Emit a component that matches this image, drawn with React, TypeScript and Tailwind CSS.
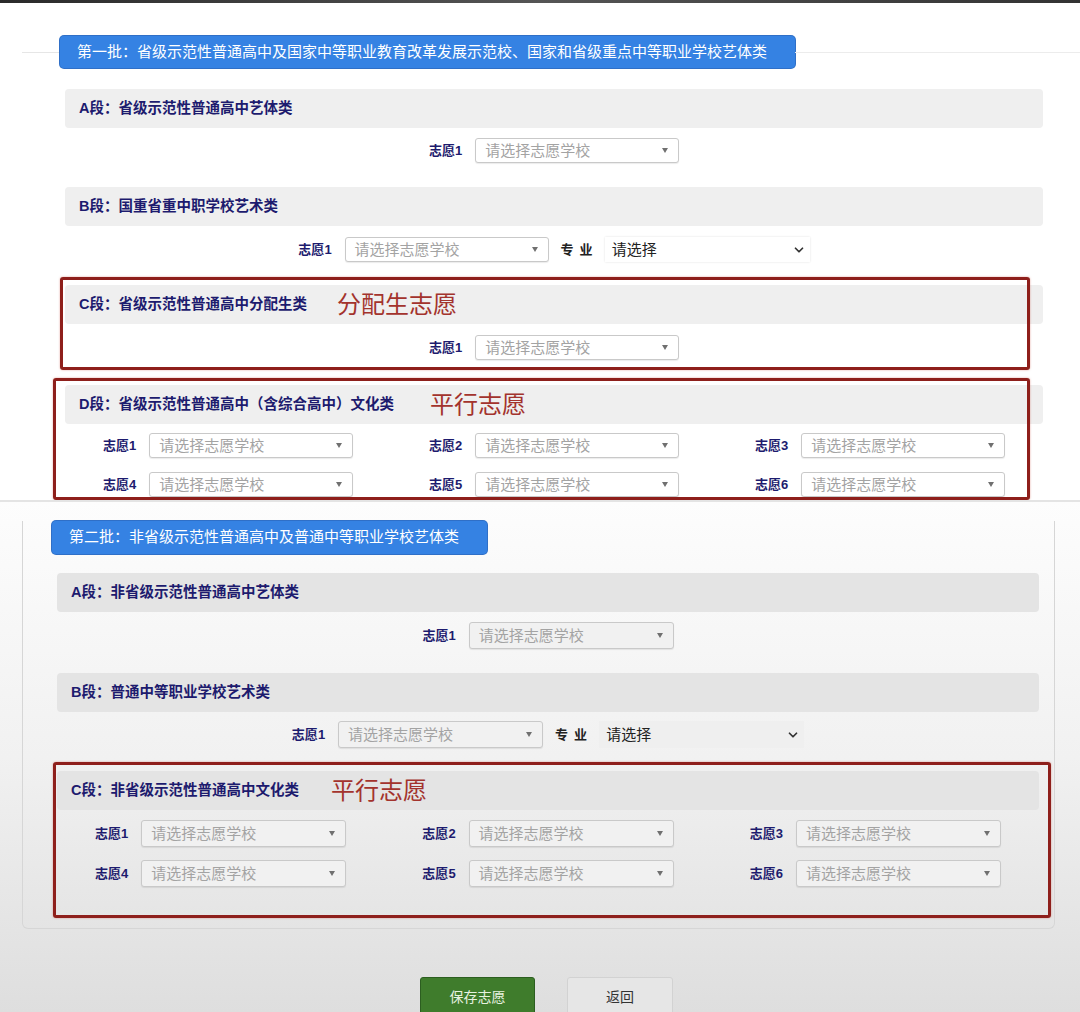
import { ChevronDown } from "lucide-react"

const navy = "text-[#1d1b6e]"

// school picker with the little filled caret
function SchoolSelect({ lower = false }: { lower?: boolean }) {
  return (
    <div
      className={`flex items-center justify-between rounded-[3px] border border-[#c9c9c9] pl-[9px] pr-[10px] shadow-[0_1px_1px_rgba(0,0,0,0.08)] ${
        lower ? "h-[27px] w-[205px] bg-[#f1f1f1]" : "h-[25px] w-[204px] bg-white"
      }`}
    >
      <span className="text-[15px] leading-none text-[#a3a3a3]">请选择志愿学校</span>
      <span className="h-0 w-0 border-x-[3.5px] border-t-[5px] border-x-transparent border-t-[#707070]" />
    </div>
  )
}

function Pick({ n, lower }: { n: number; lower?: boolean }) {
  return (
    <div className="flex items-center gap-[13px]">
      <span className={`text-[13px] leading-none font-bold ${navy}`}>志愿{n}</span>
      <SchoolSelect lower={lower} />
    </div>
  )
}

function MajorPick({ lower = false }: { lower?: boolean }) {
  return (
    <div className="flex items-center gap-[12px]">
      <Pick n={1} lower={lower} />
      <span className="text-[13px] leading-none font-bold tracking-[6px] text-[#222]">专业</span>
      <div
        className={`-ml-[6px] flex w-[205px] items-center justify-between pl-[7px] pr-[4px] ${
          lower ? "h-[27px] bg-[#efefef]" : "h-[25px] bg-white shadow-[0_0_2px_rgba(0,0,0,0.12)]"
        }`}
      >
        <span className="text-[15px] leading-none text-[#222]">请选择</span>
        <ChevronDown size={14} strokeWidth={3} className="text-[#333]" />
      </div>
    </div>
  )
}

function Bar({ title, note, gap = "", lower }: { title: string; note?: string; gap?: string; lower?: boolean }) {
  return (
    <div
      className={`flex h-[39px] items-center rounded-[4px] pl-[14px] ${
        lower ? "bg-[#e4e4e4]" : "bg-[#efefef]"
      }`}
    >
      <span className={`text-[14.5px] font-bold ${navy}`}>{title}</span>
      {note && <span className={`text-[24px] leading-none text-[#a3332d] ${gap}`}>{note}</span>}
    </div>
  )
}

function Batch({ text, w }: { text: string; w: string }) {
  return (
    <div className={`flex items-center rounded-[4px] bg-[#3582e3] pl-[17px] text-[15px] text-white shadow-[0_0_0_1px_#2f6fc7] ${w}`}>
      {text}
    </div>
  )
}

const red = "pointer-events-none absolute rounded-[3px] border-[3px] border-[#8e1f1b] shadow-[0_0_2px_rgba(200,60,40,0.5)]"

export default function App() {
  return (
    <div className="h-[1012px] w-[1080px] overflow-hidden bg-white font-['Liberation_Sans','Noto_Sans_CJK_SC',sans-serif]">
      {/* upper capture */}
      <div className="h-[500px] overflow-hidden bg-white">
        <div className="h-[3px] bg-gradient-to-r from-[#2a2a2a] via-[#555] to-[#333]" />

        <div className="mt-[33px] flex items-center">
          <div className="ml-[22px] h-px w-[38px] bg-[#e6e6e6]" />
          <Batch w="h-[32px] w-[735px]" text="第一批：省级示范性普通高中及国家中等职业教育改革发展示范校、国家和省级重点中等职业学校艺体类" />
          <div className="h-px flex-1 bg-[#ececec]" />
        </div>

        <div className="ml-[65px] w-[978px]">
          <div className="mt-[21px]">
            <Bar title="A段：省级示范性普通高中艺体类" />
            <div className="mt-[10px] flex justify-center">
              <Pick n={1} />
            </div>
          </div>

          <div className="mt-[24px]">
            <Bar title="B段：国重省重中职学校艺术类" />
            <div className="mt-[11px] flex justify-center">
              <MajorPick />
            </div>
          </div>

          <div className="relative mt-[23px]">
            <Bar title="C段：省级示范性普通高中分配生类" note="分配生志愿" gap="ml-[30px]" />
            <div className="mt-[11px] flex justify-center">
              <Pick n={1} />
            </div>
            <div className={`${red} -left-[5px] -top-[8px] h-[93px] w-[970px]`} />
          </div>

          <div className="relative mt-[25px]">
            <Bar title="D段：省级示范性普通高中（含综合高中）文化类" note="平行志愿" gap="ml-[36px]" />
            <div className="mt-[9px] grid grid-cols-3 gap-y-[14px]">
              {[1, 2, 3, 4, 5, 6].map((n) => (
                <div key={n} className="flex justify-center">
                  <Pick n={n} />
                </div>
              ))}
            </div>
            <div className={`${red} -left-[12px] -top-[7px] h-[122px] w-[977px]`} />
          </div>
        </div>
      </div>

      {/* lower capture */}
      <div className="h-[512px] border-t-2 border-[#e4e4e4] bg-gradient-to-b from-[#fdfdfd] via-[#f1f1f1] to-[#dedede]">
        <div className="ml-[22px] w-[1033px] rounded-b-[6px] border-x border-b border-[#d6d6d6] pb-[41px]">
          <div className="ml-[29px] mt-[19px] flex">
            <Batch w="h-[33px] w-[435px]" text="第二批：非省级示范性普通高中及普通中等职业学校艺体类" />
          </div>

          <div className="ml-[34px] w-[982px]">
            <div className="mt-[19px]">
              <Bar title="A段：非省级示范性普通高中艺体类" lower />
              <div className="mt-[10px] flex justify-center">
                <Pick n={1} lower />
              </div>
            </div>

            <div className="mt-[24px]">
              <Bar title="B段：普通中等职业学校艺术类" lower />
              <div className="mt-[9px] flex justify-center">
                <MajorPick lower />
              </div>
            </div>

            <div className="relative mt-[23px]">
              <Bar title="C段：非省级示范性普通高中文化类" note="平行志愿" gap="ml-[32px]" lower />
              <div className="mt-[10px] grid grid-cols-3 gap-y-[13px]">
                {[1, 2, 3, 4, 5, 6].map((n) => (
                  <div key={n} className="flex justify-center">
                    <Pick n={n} lower />
                  </div>
                ))}
              </div>
              <div className={`${red} -left-[4px] -top-[9px] h-[156px] w-[998px]`} />
            </div>
          </div>
        </div>

        <div className="mt-[48px] flex gap-[32px] pl-[420px]">
          <button className="h-[40px] w-[115px] rounded-[3px] border border-[#2c5e20] bg-[#3f7c2c] text-[14px] text-[#e8f2e0]">
            保存志愿
          </button>
          <button className="h-[40px] w-[106px] rounded-[3px] border border-[#d2d2d2] bg-[#e6e6e6] text-[14px] text-[#333]">
            返回
          </button>
        </div>
      </div>
    </div>
  )
}
